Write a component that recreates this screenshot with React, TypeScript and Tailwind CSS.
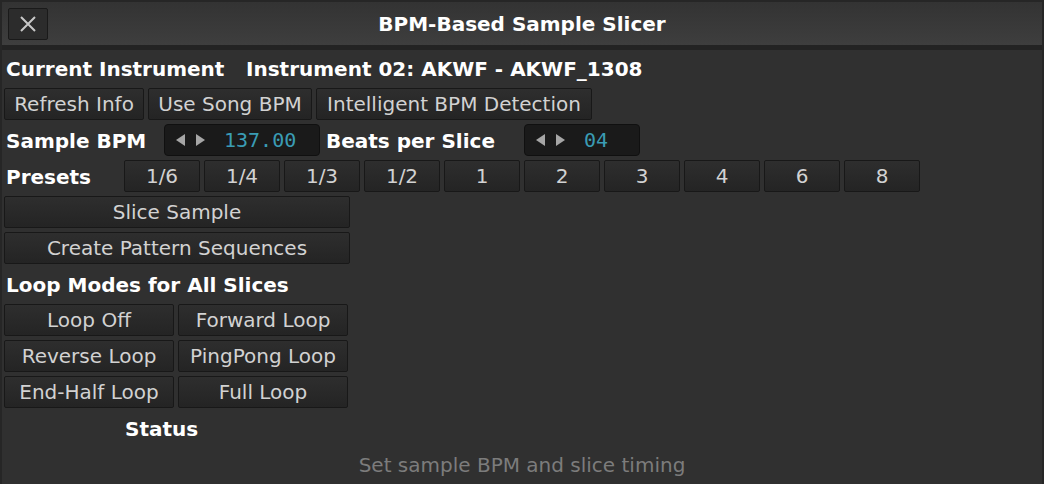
import React from 'react';

const Btn: React.FC<{ label: string; w: string }> = ({ label, w }) => (
  <button
    className={`${w} h-[32px] shrink-0 rounded-[2px] border border-[#181818] bg-gradient-to-b from-[#2e2e2e] to-[#242424] text-[20px] leading-none text-[#d2d2d2] flex items-center justify-center whitespace-nowrap`}
  >
    {label}
  </button>
);

const Arrows = () => (
  <svg width="30" height="13" viewBox="0 0 30 13" className="shrink-0">
    <polygon points="9,0 9,12 0,6" fill="#a6a6a6" />
    <polygon points="20,0 20,12 29,6" fill="#a6a6a6" />
  </svg>
);

const ValueBox: React.FC<{ value: string; w: string }> = ({ value, w }) => (
  <div className={`${w} h-[32px] shrink-0 rounded-[4px] border border-[#101010] bg-[#1a1a1a] flex items-center pl-[11px]`}>
    <Arrows />
    <span className="ml-[18px] text-[20px] leading-none text-[#3a9cb4]" style={{ fontFamily: '"DejaVu Sans Mono", monospace' }}>
      {value}
    </span>
  </div>
);

const Label: React.FC<{ text: string; w?: string }> = ({ text, w = '' }) => (
  <div className={`${w} shrink-0 h-[32px] flex items-center pl-[2px] pt-[1px] text-[20px] font-bold leading-none text-white whitespace-nowrap`}>
    {text}
  </div>
);

const presets = ['1/6', '1/4', '1/3', '1/2', '1', '2', '3', '4', '6', '8'];

export default function App() {
  return (
    <div
      className="w-[1044px] h-[484px] bg-[#262626] pt-[2px] px-[2px] flex flex-col overflow-hidden"
      style={{ fontFamily: '"DejaVu Sans", sans-serif' }}
    >
      <div className="h-[43px] shrink-0 bg-gradient-to-b from-[#333333] to-[#3e3e3e] relative flex items-center justify-center">
        <button className="absolute left-[6px] top-[6px] w-[40px] h-[32px] rounded-[2px] border border-[#1a1a1a] bg-[#2c2c2c] flex items-center justify-center">
          <svg width="16" height="16" viewBox="0 0 16 16">
            <path d="M1 1 L15 15 M15 1 L1 15" stroke="#c8c8c8" strokeWidth="2" />
          </svg>
        </button>
        <span className="text-[20px] font-bold text-white leading-none">BPM-Based Sample Slicer</span>
      </div>
      <div className="h-[5px] shrink-0 bg-[#232323]" />
      <div className="flex-1 bg-[#303030] px-[2px] pt-[2px] flex flex-col gap-[4px]">
        <div className="flex items-center">
          <Label text="Current Instrument" w="w-[240px]" />
          <Label text="Instrument 02: AKWF - AKWF_1308" />
        </div>
        <div className="flex gap-[4px]">
          <Btn label="Refresh Info" w="w-[140px]" />
          <Btn label="Use Song BPM" w="w-[164px]" />
          <Btn label="Intelligent BPM Detection" w="w-[276px]" />
        </div>
        <div className="flex gap-[4px]">
          <Label text="Sample BPM" w="w-[156px]" />
          <ValueBox value="137.00" w="w-[156px]" />
          <Label text="Beats per Slice" w="w-[196px]" />
          <ValueBox value="04" w="w-[116px]" />
        </div>
        <div className="flex gap-[4px]">
          <Label text="Presets" w="w-[116px]" />
          {presets.map(p => (
            <Btn key={p} label={p} w="w-[76px]" />
          ))}
        </div>
        <Btn label="Slice Sample" w="w-[346px]" />
        <Btn label="Create Pattern Sequences" w="w-[346px]" />
        <Label text="Loop Modes for All Slices" />
        <div className="flex gap-[4px]">
          <Btn label="Loop Off" w="w-[170px]" />
          <Btn label="Forward Loop" w="w-[170px]" />
        </div>
        <div className="flex gap-[4px]">
          <Btn label="Reverse Loop" w="w-[170px]" />
          <Btn label="PingPong Loop" w="w-[170px]" />
        </div>
        <div className="flex gap-[4px]">
          <Btn label="End-Half Loop" w="w-[170px]" />
          <Btn label="Full Loop" w="w-[170px]" />
        </div>
        <div className="h-[32px] flex items-center pl-[121px] pt-[1px] text-[20px] font-bold text-white leading-none">Status</div>
        <div className="h-[32px] flex items-center justify-center pt-[1px] text-[20px] text-[#7c7c7c] leading-none">
          Set sample BPM and slice timing
        </div>
      </div>
    </div>
  );
}
